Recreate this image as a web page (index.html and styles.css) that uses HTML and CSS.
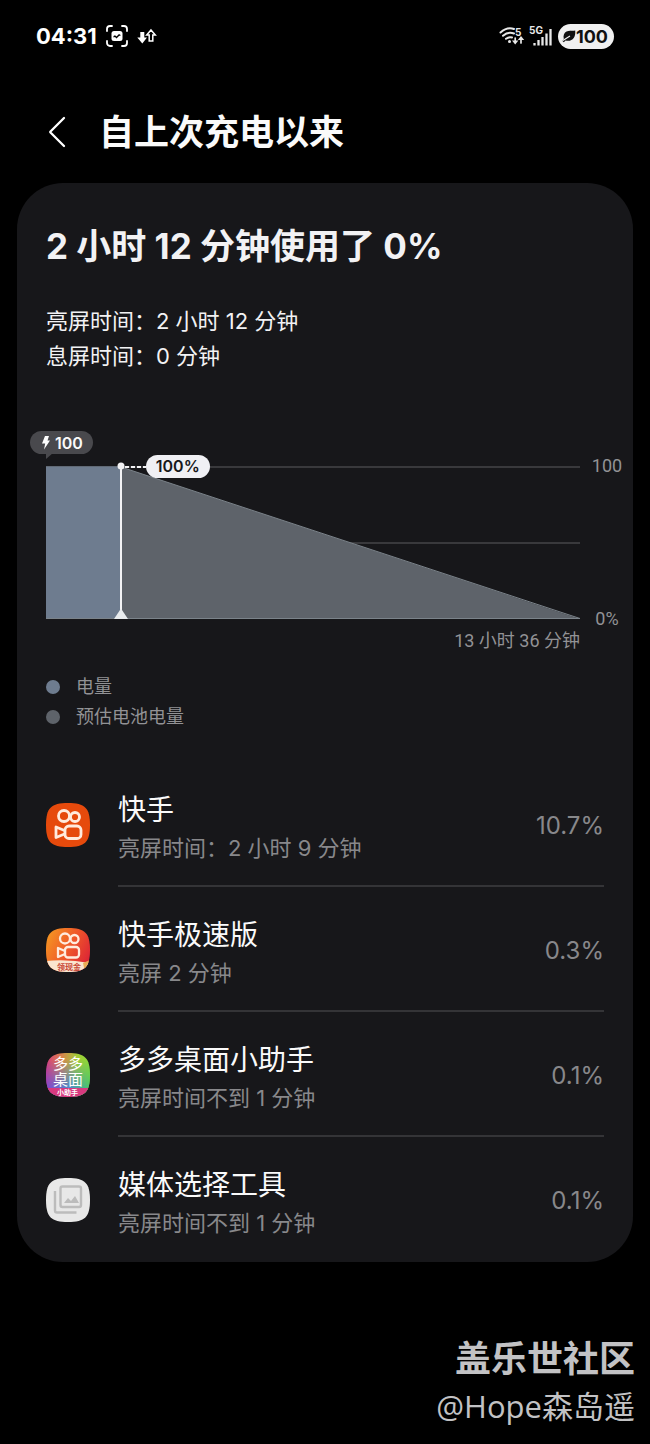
FILE: index.html
```html
<!DOCTYPE html>
<html lang="zh-CN">
<head>
<meta charset="utf-8">
<meta name="viewport" content="width=device-width, initial-scale=1">
<title>自上次充电以来</title>
<link rel="stylesheet" href="styles.css">
</head>
<body>
<header class="status">
  <div class="status-group">
    <time class="clock">04:31</time>
    <svg class="icon-capture" viewBox="0 0 22 22" width="22" height="22" aria-hidden="true">
      <path d="M1 6V4a3 3 0 0 1 3-3h2M16 1h2a3 3 0 0 1 3 3v2M21 16v2a3 3 0 0 1-3 3h-2M6 21H4a3 3 0 0 1-3-3v-2" fill="none" stroke="#fff" stroke-width="1.8" stroke-linecap="round"/>
      <rect x="5.500" y="6" width="11" height="10" rx="2.500" fill="#fff"/>
      <path d="M7.500 12.500v-1.500l1.500-.8 1.500 1.300 2.500-2.500 2 1.200-2 .8-2.500 2.500-1.500-1.500z" fill="#000"/>
    </svg>
    <svg class="icon-transfer" viewBox="0 0 20 16" width="20" height="16" aria-hidden="true">
      <path d="M3.300 4h4v5.500h2.700L5.300 15.500.3 9.500h3z" fill="#fff"/>
      <path d="M14 2l4.300 5h-2.500v6h-3.600V7H9.700z" fill="none" stroke="#fff" stroke-width="1.500"/>
    </svg>
  </div>
  <div class="status-group status-right">
    <svg viewBox="0 0 54 26" width="54" height="26" aria-label="Wi-Fi 5, 5G">
      <g fill="none" stroke="#e8e8e8" stroke-width="2" stroke-linecap="round">
        <path d="M1.500 9.500Q8 3.500 15 6M4 12.800Q9 8.300 15 10.500M7 15.800Q10 13.500 13 14.500"/>
        <path d="M16.200 15v4M22 20v-4" stroke-width="1.700"/>
      </g>
      <circle cx="10.500" cy="18.500" r="1.500" fill="#e8e8e8"/>
      <path d="M13 17.500h6.400l-3.200 4zM18.800 17h6.400L22 13z" fill="#e8e8e8"/>
      <text class="tiny" x="16" y="12.500">5</text>
      <text class="tiny" x="30" y="10.500">5G</text>
      <path d="M35.500 20v2.500M39.500 17v5.500M43.500 14v8.500M47.500 10.500v12M51.500 6v16.500" stroke="#e8e8e8" stroke-width="2.300"/>
    </svg>
    <div class="battery">
      <svg viewBox="0 0 14 14" width="14" height="14" aria-hidden="true"><path d="M13.200 1.500C10 2.500 2 0 1.500 7.500l.3 2.500L.5 12l1.300 1.200 1.700-1.700C10 13 14 9 13.200 1.500z" fill="#111"/><path d="M1 11.500L4 9.500 8 7" fill="none" stroke="#f0f0f0" stroke-width="1.200"/></svg>
      <span>100</span>
    </div>
  </div>
</header>

<div class="titlebar">
  <button class="back" type="button" aria-label="返回">
    <svg viewBox="0 0 18 32" width="18" height="32"><path d="M16 2L2.500 15.500Q2 16 2.500 16.500L16 30" fill="none" stroke="#fff" stroke-width="2.300" stroke-linecap="round" stroke-linejoin="round"/></svg>
  </button>
  <h1>自上次充电以来</h1>
</div>

<main class="card">
  <section class="summary">
    <h2>2 小时 12 分钟使用了 0%</h2>
    <p>亮屏时间：2 小时 12 分钟</p>
    <p>息屏时间：0 分钟</p>
  </section>

  <section class="chart">
    <div class="plot">
      <svg class="plot-svg" viewBox="0 0 534 154" preserveAspectRatio="none" aria-hidden="true">
        <path d="M0 1H534M0 77.500H534" stroke="#39393c" stroke-width="2"/>
        <path d="M75 1L534 154H75z" fill="#5e636a"/>
        <path d="M75 1L534 153.500H0" fill="none" stroke="#7b848b" stroke-width="1"/>
        <path d="M0 1H75V153H0z" fill="#6e7c8f"/>
        <path d="M0 .5H75" stroke="#626b77"/>
      </svg>
      <div class="charge-tag">
        <svg viewBox="0 0 8 14" width="8" height="14" aria-hidden="true"><path d="M3 0h4L5.500 4.500H8L2 13.500 3.200 7.500H0z" fill="#fff"/></svg>
        <span>100</span>
      </div>
      <svg class="marker" viewBox="0 0 16 160" width="16" height="160" aria-hidden="true">
        <path d="M8 5V154" stroke="#f3f3f5" stroke-width="2"/>
        <circle cx="8" cy="6" r="3.500" fill="#f3f3f5"/>
        <path d="M8 148.500L15 159H1z" fill="#e8ebee"/>
      </svg>
      <div class="level">
        <svg viewBox="0 0 25 2" width="25" height="2" aria-hidden="true"><path d="M4 1H25" stroke="#f3f3f5" stroke-width="2" stroke-dasharray="4 2"/></svg>
        <span class="level-tag">100%</span>
      </div>
    </div>
    <div class="axis"><span>100</span><span>0%</span></div>
    <div class="remaining">13 小时 36 分钟</div>
  </section>

  <ul class="legend">
    <li><i class="dot dot-level"></i>电量</li>
    <li><i class="dot dot-estimate"></i>预估电池电量</li>
  </ul>

  <ul class="apps">
    <li class="app">
      <svg class="app-icon" viewBox="0 0 44 44" width="44" height="44" aria-hidden="true">
        <path class="ks-bg" d="M22 0C39 0 44 5 44 22S39 44 22 44 0 39 0 22 5 0 22 0z"/>
        <g fill="none" stroke="#ffebdd" stroke-width="2.800">
          <circle cx="18" cy="13" r="5.500"/><circle cx="29" cy="14" r="4.500"/>
          <rect x="19" y="23" width="16" height="12.500" rx="4"/>
          <path d="M18.500 27.500L10 24v10.500l8.500-3.500" stroke-linejoin="round"/>
        </g>
      </svg>
      <div class="app-body"><div class="app-text"><h3>快手</h3><p>亮屏时间：2 小时 9 分钟</p></div><span class="share">10.7%</span></div>
    </li>
    <li class="app">
      <svg class="app-icon" viewBox="0 0 44 44" width="44" height="44" aria-hidden="true">
        <defs>
          <linearGradient id="warm" x1="0" y1="0.200" x2="1" y2="0.700"><stop offset="0" stop-color="#f49522"/><stop offset=".5" stop-color="#f05a29"/><stop offset="1" stop-color="#dc2436"/></linearGradient>
          <clipPath id="tile"><path d="M22 0C39 0 44 5 44 22S39 44 22 44 0 39 0 22 5 0 22 0z"/></clipPath>
        </defs>
        <g clip-path="url(#tile)">
          <rect width="44" height="44" fill="url(#warm)"/>
          <path d="M0 33Q22 31 44 35V44H0z" fill="#fae5cf"/>
          <path d="M37 35l7-3v12h-5z" fill="#e9ad55"/>
          <text class="ribbon" x="11" y="42">领现金</text>
        </g>
        <g fill="none" stroke="#ffebdd" stroke-width="2.300">
          <circle cx="19" cy="10.500" r="5"/><circle cx="28.500" cy="11" r="4"/>
          <rect x="19" y="19" width="14" height="10.500" rx="3"/>
          <path d="M19 23L12 20v9l7-3" stroke-linejoin="round"/>
        </g>
      </svg>
      <div class="app-body"><div class="app-text"><h3>快手极速版</h3><p>亮屏 2 分钟</p></div><span class="share">0.3%</span></div>
    </li>
    <li class="app">
      <svg class="app-icon" viewBox="0 0 44 44" width="44" height="44" aria-hidden="true">
        <defs>
          <linearGradient id="hue"><stop offset="0" stop-color="#d83d7b"/><stop offset=".35" stop-color="#d9824c"/><stop offset=".7" stop-color="#a4cb38"/><stop offset="1" stop-color="#8bd938"/></linearGradient>
          <linearGradient id="cool"><stop offset="0" stop-color="#8544d0"/><stop offset=".55" stop-color="#4a8fcc"/><stop offset="1" stop-color="#48c768"/></linearGradient>
          <linearGradient id="fade" x2="0" y2="1"><stop offset=".15" stop-color="#000"/><stop offset=".8" stop-color="#fff"/></linearGradient>
          <mask id="lower"><rect width="44" height="44" fill="url(#fade)"/></mask>
        </defs>
        <g clip-path="url(#tile)">
          <rect width="44" height="44" fill="url(#hue)"/>
          <rect width="44" height="44" fill="url(#cool)" mask="url(#lower)"/>
          <rect y="35" width="44" height="9" fill="#d8397f"/>
          <text class="tile-text" x="7" y="16">多多</text>
          <text class="tile-text" x="7" y="32">桌面</text>
          <text class="tile-small" x="11" y="42">小助手</text>
        </g>
      </svg>
      <div class="app-body"><div class="app-text"><h3>多多桌面小助手</h3><p>亮屏时间不到 1 分钟</p></div><span class="share">0.1%</span></div>
    </li>
    <li class="app">
      <svg class="app-icon" viewBox="0 0 44 44" width="44" height="44" aria-hidden="true">
        <path d="M22 0C39 0 44 5 44 22S39 44 22 44 0 39 0 22 5 0 22 0z" fill="#e8e8e8"/>
        <g fill="none" stroke="#bcbcbc" stroke-width="2.400">
          <rect x="14.500" y="8.500" width="20.500" height="20.500" rx="2"/>
          <path d="M9 13v19.500q0 2 2 2h19.500"/>
        </g>
        <path d="M18 25l4-5 3 3 4-5 4 7z" fill="#bcbcbc"/>
      </svg>
      <div class="app-body"><div class="app-text"><h3>媒体选择工具</h3><p>亮屏时间不到 1 分钟</p></div><span class="share">0.1%</span></div>
    </li>
  </ul>
</main>

<footer class="credit">
  <strong>盖乐世社区</strong>
  <span>@Hope森岛遥</span>
</footer>
</body>
</html>
```
FILE: styles.css
```css
* { box-sizing: border-box; }
body {
  margin: 0;
  background: #000;
  color: #f2f2f4;
  font-family: Inter, "Noto Sans CJK SC", sans-serif;
}
h1, h2, h3, p, ul { margin: 0; padding: 0; font-weight: 400; }
ul { list-style: none; }
svg { display: block; flex: none; }

.status {
  display: flex;
  justify-content: space-between;
  align-items: center;
  height: 72px;
  padding: 0 36px;
}
.status-group { display: flex; align-items: center; gap: 9px; }
.status-right { gap: 5px; }
.clock { font-size: 22px; font-weight: 700; color: #fff; }
.tiny { font-size: 10px; font-weight: 700; fill: #e8e8e8; }
.battery {
  display: flex;
  align-items: center;
  height: 25px;
  padding: 0 6px 0 4px;
  border-radius: 13px;
  background: #f0f0f0;
  color: #111;
  font-size: 18px;
  font-weight: 700;
}

.titlebar {
  display: flex;
  align-items: center;
  gap: 33px;
  height: 111px;
  padding: 8px 48px 0;
}
.back { display: flex; padding: 0; border: 0; background: none; cursor: pointer; }
h1 { font-size: 35px; font-weight: 700; line-height: 48px; color: #fafafa; }

.card {
  margin: 0 17px;
  padding-top: 37px;
  border-radius: 46px;
  background: #17171a;
}
.summary { padding: 0 29px; }
h2 { margin-bottom: 32px; font-size: 35px; font-weight: 700; line-height: 52px; }
.summary p { font-size: 22px; line-height: 35px; }

.chart {
  display: grid;
  grid-template-columns: 1fr 28px;
  column-gap: 13px;
  padding: 92px 12px 0 29px;
  color: #929295;
  font-size: 18px;
}
.plot { position: relative; height: 153px; }
.plot-svg { width: 100%; height: 100%; }
.charge-tag {
  position: absolute;
  top: -35px;
  left: -16px;
  display: flex;
  align-items: center;
  gap: 5px;
  height: 23px;
  padding: 0 10px 0 12px;
  border-radius: 12px;
  background: #49494d;
  color: #fafafa;
  font-size: 16px;
  font-weight: 600;
}
.charge-tag::after {
  content: "";
  position: absolute;
  top: 22px;
  left: 16px;
  border-top: 6px solid #49494d;
  border-right: 7px solid transparent;
}
.marker { position: absolute; top: -6px; left: 14%; margin-left: -8px; }
.level { position: absolute; top: -11px; left: 14%; display: flex; align-items: center; }
.level-tag {
  padding: 0 10px;
  border-radius: 12px;
  background: #f0f0f4;
  color: #17171a;
  font-size: 16px;
  font-weight: 600;
  line-height: 23px;
}
.axis {
  display: flex;
  flex-direction: column;
  justify-content: space-between;
  align-items: center;
  margin: -11px 0;
  font-family: Roboto, sans-serif;
  line-height: 22px;
}
.remaining {
  padding-top: 10px;
  font-family: Roboto, "Noto Sans CJK SC", sans-serif;
  line-height: 24px;
  text-align: right;
}

.legend { padding: 19px 29px 0; color: #929295; font-size: 18px; line-height: 30px; }
.legend li { display: flex; align-items: center; gap: 16px; }
.dot { width: 14px; height: 14px; border-radius: 50%; }
.dot-level { background: #6e7c8f; }
.dot-estimate { background: #5e636a; }

.apps { padding: 30px 29px 0; }
.app { display: flex; align-items: center; gap: 28px; }
.app-body {
  flex: 1;
  display: flex;
  align-items: center;
  justify-content: space-between;
  height: 125px;
  border-bottom: 2px solid #343437;
}
.app:last-child .app-body { border-bottom-color: transparent; }
.app-text { padding-top: 10px; }
h3 { font-size: 28px; line-height: 38px; color: #fafafa; }
.app p { font-size: 22px; line-height: 38px; color: #88888b; }
.share { padding-top: 4px; font-size: 24px; color: #88888b; }
.ks-bg { fill: #e64a0c; }
.ribbon { font-size: 8px; font-weight: 700; fill: #c84838; }
.tile-text { font-size: 15px; fill: #fff; }
.tile-small { font-size: 7px; font-weight: 700; fill: #fff; }

.credit {
  display: flex;
  flex-direction: column;
  align-items: flex-end;
  padding: 73px 15px 15px;
  color: #c2c2c4;
  font-family: "Open Sans", "Noto Sans CJK SC", sans-serif;
}
.credit strong { font-size: 36px; line-height: 48px; }
.credit span { font-size: 31px; line-height: 46px; }
```
